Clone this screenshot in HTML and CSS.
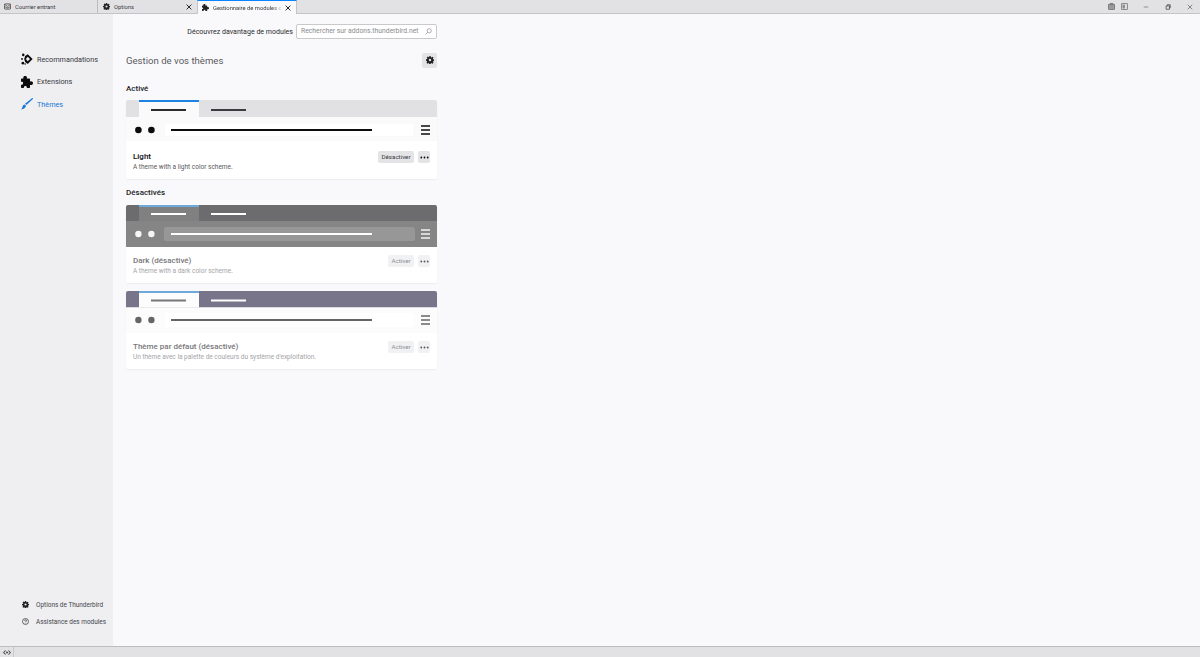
FILE: index.html
```html
<!DOCTYPE html>
<html lang="fr">
<head>
<meta charset="utf-8">
<title>Gestionnaire de modules complémentaires</title>
<link rel="stylesheet" href="styles.css">
</head>
<body>
<svg class="defs" width="0" height="0" aria-hidden="true">
  <defs>
    <symbol id="gear" viewBox="0 0 16 16"><path fill="currentColor" fill-rule="evenodd" d="M6.600 0h2.800l.4 2.300 1.200.5L13 1.500l2 2-1.300 2 .5 1.200 2.300.4v2.800l-2.300.4-.5 1.200 1.300 2-2 2-2-1.300-1.200.5-.4 2.300H6.600l-.4-2.300-1.200-.5-2 1.300-2-2 1.300-2-.5-1.200L0 9.400V6.600l2.300-.4.5-1.200-1.300-2 2-2 2 1.300 1.200-.5zM8 5.600a2.400 2.400 0 1 0 0 4.800 2.400 2.400 0 0 0 0-4.800z"/></symbol>
    <symbol id="puzzle" viewBox="0 0 16 16"><path fill="currentColor" d="M5.500 0C7 0 8 .9 8 2c0 .5-.2.900-.4 1.300h3.400a1 1 0 0 1 1 1v3.200c.4-.3.900-.5 1.400-.5 1.400 0 2.600 1 2.600 2.500S14.800 12 13.400 12c-.5 0-1-.2-1.400-.5V15a1 1 0 0 1-1 1H7.800v-1c0-1-.9-1.800-2-1.800s-2 .8-2 1.800v1H1a1 1 0 0 1-1-1v-3.400h1c1 0 1.800-.9 1.800-2S2 7.800 1 7.800H0V4.300a1 1 0 0 1 1-1h2.400C3.200 2.900 3 2.500 3 2c0-1.100 1-2 2.500-2z"/></symbol>
    <symbol id="close" viewBox="0 0 8 8"><path stroke="currentColor" stroke-width="1.300" d="M.8.8l6.400 6.400M7.200.8L.8 7.200"/></symbol>
    <symbol id="dots" viewBox="0 0 9 3"><circle cx="1.300" cy="1.500" r=".9" fill="currentColor"/><circle cx="4.500" cy="1.500" r=".9" fill="currentColor"/><circle cx="7.700" cy="1.500" r=".9" fill="currentColor"/></symbol>
  </defs>
</svg>

<header class="tabbar">
  <div class="tab tab-mail">
    <svg class="tab-icon" viewBox="0 0 12 10"><rect x=".6" y=".6" width="10.800" height="8.800" rx="1.500" fill="none" stroke="currentColor" stroke-width="1.200"/><path d="M1 6h2.800l1 1.300h2.400l1-1.300H11M1.500 1.800L6 4.800l4.500-3" fill="none" stroke="currentColor"/></svg>
    <span class="tab-label">Courrier entrant</span>
  </div>
  <div class="tab tab-options">
    <svg class="tab-icon"><use href="#gear"/></svg>
    <span class="tab-label">Options</span>
    <svg class="tab-close"><use href="#close"/></svg>
  </div>
  <div class="tab tab-active">
    <svg class="tab-icon"><use href="#puzzle"/></svg>
    <span class="tab-label tab-label-fade">Gestionnaire de modules co</span>
    <svg class="tab-close"><use href="#close"/></svg>
  </div>
  <div class="win-controls">
    <svg class="win-app" viewBox="0 0 9 9"><rect x=".5" y="1.500" width="8" height="7" rx="1" fill="#9a9a9c" stroke="#666"/><rect x="2.500" y="0" width="4" height="3" fill="#808080"/></svg>
    <svg class="win-app win-app-last" viewBox="0 0 9 9"><rect x=".5" y=".5" width="8" height="8" rx="1" fill="#ddd" stroke="#666"/><rect x="2" y="2" width="3" height="5" fill="#8c8c8c"/></svg>
    <svg class="win-btn" viewBox="0 0 8 8"><path d="M1 4h6" stroke="#777"/></svg>
    <svg class="win-btn" viewBox="0 0 8 8"><path d="M1.500 2.500h4.500v4.500h-4.500zM3 2.500V1h4v4H6" fill="none" stroke="#444"/></svg>
    <svg class="win-btn" viewBox="0 0 8 8"><path d="M1 1l6 6M7 1L1 7" stroke="#666"/></svg>
  </div>
</header>

<div class="app">
  <nav class="sidebar">
    <ul class="cats">
      <li class="cat">
        <svg class="cat-icon" viewBox="0 0 16 16"><path fill="currentColor" fill-rule="evenodd" d="M9 1.500L15.500 8 9 14.500 5.500 12 4.300 8 5.500 4zM9 5L6.500 8 9 11l3-3z"/><circle cx="3" cy="2.500" r="1.700" fill="currentColor"/><circle cx="2.500" cy="13.500" r="1.800" fill="currentColor"/><circle cx="1.300" cy="8" r="1.200" fill="currentColor"/><circle cx="5.500" cy="14.800" r="1" fill="currentColor"/></svg>
        <span>Recommandations</span>
      </li>
      <li class="cat">
        <svg class="cat-icon"><use href="#puzzle"/></svg>
        <span>Extensions</span>
      </li>
      <li class="cat cat-selected">
        <svg class="cat-icon" viewBox="0 0 16 16"><path fill="currentColor" d="M15.700.4c.4.400.2 1-.2 1.400L7.200 9.400 5.400 7.700l8.800-7.200c.5-.4 1.100-.5 1.500-.1zM4.700 8.500l2 1.800C6.300 12.800 3.800 15 .2 15.300c1.300-1 1.400-2.500 1.900-3.900.4-1.300 1.200-2.500 2.600-2.900z"/></svg>
        <span>Thèmes</span>
      </li>
    </ul>
    <ul class="side-foot">
      <li class="foot-item">
        <svg class="foot-icon"><use href="#gear"/></svg>
        <span>Options de Thunderbird</span>
      </li>
      <li class="foot-item">
        <svg class="foot-icon" viewBox="0 0 16 16"><circle cx="8" cy="8" r="6.800" fill="none" stroke="currentColor" stroke-width="1.500"/><path d="M5.800 6.300C5.800 5 6.800 4.300 8 4.300s2.300.7 2.300 1.900C10.300 7.800 8 7.800 8 9.500" fill="none" stroke="currentColor" stroke-width="1.600"/><circle cx="8" cy="11.600" r="1" fill="currentColor"/></svg>
        <span>Assistance des modules</span>
      </li>
    </ul>
  </nav>

  <main class="content">
    <div class="search-row">
      <span class="search-label">Découvrez davantage de modules</span>
      <div class="search-box">
        <span>Rechercher sur addons.thunderbird.net</span>
        <svg class="search-icon" viewBox="0 0 10 10"><circle cx="6" cy="4" r="3" fill="none" stroke="currentColor"/><path d="M3.800 6.200L1 9" stroke="currentColor"/></svg>
      </div>
    </div>

    <div class="title-row">
      <h1 class="page-title">Gestion de vos thèmes</h1>
      <button class="gear-btn"><svg class="gear-icon"><use href="#gear"/></svg></button>
    </div>

    <h2 class="section-title section-first">Activé</h2>
    <article class="card card-first">
      <svg class="preview" viewBox="0 0 311 41" width="311" height="41">
        <rect width="311" height="17" fill="#e1e1e3"/>
        <rect y="17" width="311" height="24" fill="#fafafb"/>
        <rect x="13" width="60" height="17" fill="#fafafb"/>
        <rect x="13" width="60" height="2" fill="#1c84e0"/>
        <rect x="25" y="9" width="35" height="2" fill="#2c2c2e"/>
        <rect x="85" y="9" width="35" height="2" fill="#3c3c40"/>
        <circle cx="12.400" cy="30" r="3.300" fill="#0c0c0d"/>
        <circle cx="25.400" cy="30" r="3.300" fill="#0c0c0d"/>
        <rect x="39" y="24" width="248" height="12" fill="#fff"/>
        <rect x="45" y="29" width="201" height="2" fill="#0c0c0d"/>
        <path d="M295 26h9M295 30h9M295 34h9" stroke="#0c0c0d" stroke-width="1.300"/>
      </svg>
      <div class="card-body">
        <div class="card-text">
          <div class="card-name">Light</div>
          <div class="card-desc">A theme with a light color scheme.</div>
        </div>
        <div class="card-actions">
          <button class="btn">Désactiver</button>
          <button class="btn-more"><svg class="dots"><use href="#dots"/></svg></button>
        </div>
      </div>
    </article>

    <h2 class="section-title section-second">Désactivés</h2>
    <article class="card card-disabled">
      <svg class="preview" viewBox="0 0 311 42" width="311" height="42">
        <rect width="311" height="16" fill="#6c6c6e"/>
        <rect y="16" width="311" height="26" fill="#858585"/>
        <rect x="13" width="60" height="16" fill="#808080"/>
        <rect x="13" width="60" height="2" fill="#6da9da"/>
        <rect x="25" y="8" width="35" height="2" fill="#fff"/>
        <rect x="85" y="8" width="35" height="2" fill="#fff"/>
        <circle cx="12.400" cy="29" r="3.200" fill="#f6f6f6"/>
        <circle cx="25.400" cy="29" r="3.200" fill="#f6f6f6"/>
        <rect x="38" y="22" width="251" height="14" rx="2" fill="#979797"/>
        <rect x="45" y="28" width="201" height="2" fill="#fff"/>
        <path d="M295 25h9M295 29h9M295 33h9" stroke="#f2f2f2" stroke-width="1.300"/>
      </svg>
      <div class="card-body card-body-short">
        <div class="card-text">
          <div class="card-name">Dark (désactivé)</div>
          <div class="card-desc">A theme with a dark color scheme.</div>
        </div>
        <div class="card-actions">
          <button class="btn">Activer</button>
          <button class="btn-more"><svg class="dots"><use href="#dots"/></svg></button>
        </div>
      </div>
    </article>

    <article class="card card-disabled card-next">
      <svg class="preview" viewBox="0 0 311 42" width="311" height="42">
        <rect width="311" height="16.500" fill="#78758a"/>
        <rect y="16.500" width="311" height="25.500" fill="#fcfcfd"/>
        <rect x="13" width="60" height="16.500" fill="#fcfcfd"/>
        <rect x="13" width="60" height="2" fill="#6da9da"/>
        <rect x="25" y="8.500" width="35" height="2" fill="#77777a"/>
        <rect x="85" y="8.500" width="35" height="2" fill="#fff"/>
        <circle cx="12.400" cy="29" r="3.200" fill="#656567"/>
        <circle cx="25.400" cy="29" r="3.200" fill="#656567"/>
        <rect x="39" y="22" width="248" height="14" fill="#fff"/>
        <rect x="45" y="28" width="201" height="2" fill="#656567"/>
        <path d="M295 25h9M295 29h9M295 33h9" stroke="#656567" stroke-width="1.300"/>
      </svg>
      <div class="card-body card-body-short">
        <div class="card-text">
          <div class="card-name">Thème par défaut (désactivé)</div>
          <div class="card-desc">Un thème avec la palette de couleurs du système d'exploitation.</div>
        </div>
        <div class="card-actions">
          <button class="btn">Activer</button>
          <button class="btn-more"><svg class="dots"><use href="#dots"/></svg></button>
        </div>
      </div>
    </article>
  </main>
</div>

<footer class="statusbar">
  <div class="status-cell">
    <svg class="status-icon" viewBox="0 0 10 8"><path d="M3.200 1.500L.8 4l2.400 2.500M6.800 1.500L9.200 4 6.800 6.500" fill="none" stroke="#444" stroke-width="1.300"/><circle cx="5" cy="4" r="1.200" fill="#444"/></svg>
  </div>
</footer>
</body>
</html>
```

FILE: styles.css
```css
* { box-sizing: border-box; }
html, body { height: 100%; }
body {
  margin: 0;
  display: flex;
  flex-direction: column;
  overflow: hidden;
  background: #f9f9fb;
  color: #0c0c0d;
  font-family: Roboto, "Open Sans", "Liberation Sans", sans-serif;
}
ul { list-style: none; margin: 0; padding: 0; }
h1, h2 { margin: 0; }
button { font-family: inherit; border: 0; padding: 0; }
.defs { position: absolute; }

/* Tab bar */
.tabbar {
  height: 14px;
  flex: none;
  display: flex;
  align-items: stretch;
  background: #e2e2e5;
  border-bottom: 1px solid #c4c4c7;
  font-size: 5.800px;
  color: #38383d;
}
.tab { display: flex; align-items: center; white-space: nowrap; overflow: hidden; }
.tab-mail { width: 98px; padding-left: 4px; border-right: 1px solid #bdbdc0; }
.tab-options { width: 99px; padding-left: 5px; }
.tab-active {
  width: 100px;
  padding-left: 4px;
  height: 14px;
  background: #f9f9fb;
  border-top: 1px solid #0a84ff;
  border-left: 1px solid #c4c4c7;
  border-right: 1px solid #c4c4c7;
}
.tab-icon { width: 7px; height: 7px; flex: none; color: #222; }
.tab-label { margin-left: 4px; flex: 1; min-width: 0; }
.tab-label-fade { -webkit-mask-image: linear-gradient(to right, #000 85%, rgba(0, 0, 0, .15)); mask-image: linear-gradient(to right, #000 85%, rgba(0, 0, 0, .15)); }
.tab-close { width: 6px; height: 6px; flex: none; margin: 0 5px 0 3px; color: #222; }
.win-controls { margin-left: auto; display: flex; align-items: center; padding-right: 7px; }
.win-app { width: 7px; height: 7px; margin-right: 6px; }
.win-app-last { margin-right: 15px; }
.win-btn { width: 6px; height: 6px; }
.win-btn + .win-btn { margin-left: 16px; }

/* Layout */
.app { flex: 1; min-height: 0; display: flex; }
.sidebar {
  width: 113px;
  flex: none;
  display: flex;
  flex-direction: column;
  justify-content: space-between;
  background: #efeff2;
  padding: 34px 0 16px 21px;
}
.cat {
  height: 22.500px;
  display: flex;
  align-items: center;
  gap: 4px;
  font-size: 7.250px;
  color: #38383d;
}
.cat-icon { width: 12px; height: 12px; flex: none; color: #0c0c0d; }
.cat-selected, .cat-selected .cat-icon { color: #1a78d4; }
.foot-item {
  height: 17px;
  display: flex;
  align-items: center;
  gap: 7px;
  font-size: 6.450px;
  color: #45454a;
  white-space: nowrap;
}
.foot-icon { width: 7px; height: 7px; margin-left: 1px; flex: none; color: #222; }

/* Content */
.content { width: 324px; padding: 9px 0 0 13px; }
.search-row { display: flex; align-items: center; justify-content: flex-end; gap: 3px; height: 16px; }
.search-label { font-size: 7.050px; color: #2a2a2e; white-space: nowrap; }
.search-box {
  width: 141px;
  height: 15px;
  display: flex;
  align-items: center;
  justify-content: space-between;
  padding: 0 4px;
  background: #fff;
  border: 1px solid #c9c9cc;
  border-radius: 2px;
  font-size: 6.800px;
  color: #8a8a8e;
  white-space: nowrap;
}
.search-icon { width: 7px; height: 7px; color: #8a8a8e; flex: none; }
.title-row { display: flex; align-items: center; justify-content: space-between; margin-top: 13px; height: 16px; }
.page-title { font-size: 9.600px; font-weight: 400; color: #5a5a5e; }
.gear-btn { width: 15px; height: 15px; background: #e4e4e7; border-radius: 2px; display: flex; align-items: center; justify-content: center; }
.gear-icon { width: 8px; height: 8px; color: #222; }
.section-title { font-size: 8px; font-weight: 500; color: #1c1c1f; line-height: 11px; }
.section-first { margin-top: 15px; }
.section-second { margin-top: 8px; }
.card {
  margin-top: 7px;
  width: 311px;
  background: #fff;
  border-radius: 2px;
  box-shadow: 0 1px 2px rgba(12, 12, 13, .06);
  overflow: hidden;
}
.card-first { margin-top: 6px; }
.card-next { margin-top: 8px; }
.preview { display: block; }
.card-body { height: 38px; display: flex; justify-content: space-between; padding: 10px 7px 0; }
.card-body-short { height: 36px; padding-top: 8px; }
.card-name { font-size: 8px; font-weight: 500; line-height: 11px; color: #0c0c0d; }
.card-desc { font-size: 6.500px; line-height: 9px; margin-top: 1px; color: #5a5a5e; }
.card-actions { display: flex; gap: 4px; align-items: flex-start; }
.btn { height: 12px; width: 36px; background: #e4e4e7; border-radius: 2px; font-size: 6.200px; color: #38383d; }
.card-disabled .btn { width: 26px; background: #f1f1f3; color: #8e8e92; }
.btn-more { width: 12px; height: 12px; background: #e4e4e7; border-radius: 2px; display: flex; align-items: center; justify-content: center; color: #0c0c0d; }
.dots { width: 9px; height: 3px; }
.card-disabled .card-name { color: #77777a; }
.card-disabled .card-desc { color: #a4a4a8; }
.card-disabled .btn-more { background: #f1f1f3; color: #55555a; }

/* Status bar */
.statusbar { height: 11px; flex: none; background: #e2e2e5; border-top: 1px solid #bdbdc0; }
.status-cell { width: 14px; height: 10px; border-right: 1px solid #c9c9cc; display: flex; align-items: center; justify-content: center; }
.status-icon { width: 8px; height: 7px; }
```
